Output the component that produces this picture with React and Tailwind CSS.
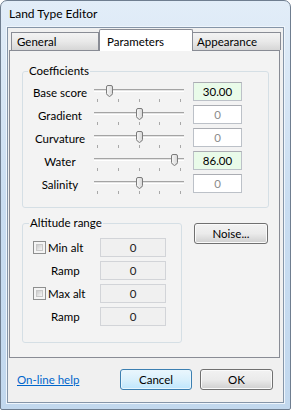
import React from "react";

const font = { fontFamily: "Lato, 'Noto Sans', sans-serif" };

function Thumb() {
  return (
    <svg width="7" height="12" viewBox="0 0 7 12" className="block">
      <defs>
        <linearGradient id="tg" x1="0" y1="0" x2="1" y2="0">
          <stop offset="0" stopColor="#f8f8f8" />
          <stop offset="1" stopColor="#d6d6d6" />
        </linearGradient>
      </defs>
      <path
        d="M0.5 2 Q0.5 0.5 2 0.5 H5 Q6.5 0.5 6.5 2 V8.5 Q6.5 10 3.5 11.5 Q0.5 10 0.5 8.5 Z"
        fill="url(#tg)"
        stroke="#7b7b7b"
        strokeWidth="1"
      />
    </svg>
  );
}

function Slider({ thumb }) {
  return (
    <div className="relative w-[90px] h-[21px] shrink-0">
      <div className="absolute left-0 top-[7px] w-[90px] h-[3px] border-t border-[#a4a4a4] bg-[#e4e4e4] border-b border-b-[#ffffff]" />
      <div className="absolute left-0 top-[17px] w-[90px] px-[3px] flex justify-between">
        {[0, 1, 2, 3, 4].map((i) => (
          <div key={i} className="w-px h-[3px] bg-[#a8a8a8]" />
        ))}
      </div>
      <div className={"absolute top-[3px] " + thumb}>
        <Thumb />
      </div>
    </div>
  );
}

const coeffs = [
  { label: "Base score", thumb: "left-[12px]", value: "30.00", active: true },
  { label: "Gradient", thumb: "left-[42px]", value: "0", active: false },
  { label: "Curvature", thumb: "left-[42px]", value: "0", active: false },
  { label: "Water", thumb: "left-[77px]", value: "86.00", active: true },
  { label: "Salinity", thumb: "left-[42px]", value: "0", active: false },
];

function Checkbox() {
  return (
    <div className="w-[13px] h-[13px] border border-[#8e8f8f] bg-[#f4f4f4] p-[2px] shrink-0">
      <div className="w-full h-full border border-[#c8c8c8] bg-gradient-to-br from-[#cbcbcb] to-[#f6f6f6]" />
    </div>
  );
}

function AltBox() {
  return (
    <div className="w-[66px] h-[19px] border border-[#d2d4d8] bg-[#f0f0f0] flex items-center justify-center text-[#222] leading-none">
      0
    </div>
  );
}

function VistaButton({ children, className, def }) {
  return (
    <div
      className={
        "h-[21px] rounded-[3px] border flex items-center justify-center text-black leading-none shrink-0 " +
        (def
          ? "border-[#3c7fb1] bg-gradient-to-b from-[#eaf6fd] via-[#d9f0fc] to-[#bee6fd] shadow-[inset_0_0_0_1px_#e8f6fd]"
          : "border-[#707070] bg-gradient-to-b from-[#f2f2f2] via-[#ebebeb] to-[#cfcfcf] shadow-[inset_0_0_0_1px_#fafafa]") +
        " " +
        className
      }
    >
      {children}
    </div>
  );
}

export default function App() {
  return (
    <div
      style={font}
      className="w-[291px] h-[410px] border border-[#6f7e90] rounded-t-[7px] rounded-b-[2px] bg-gradient-to-b from-[#e2edf8] via-[#c9ddf1] to-[#c2d8ee] text-[11.5px] text-black overflow-hidden"
    >
      <div className="h-[26px] pl-[8px] flex items-center text-[12px]">Land Type Editor</div>
      <div className="ml-[6px] w-[277px] h-[376px] border border-[#8595a8] bg-[#f0f0f0] shadow-[0_0_0_1px_#eef5fc] flex flex-col">
        <div className="pl-[1px]">
          {/* tab strip */}
          <div className="h-[22px] flex items-end pl-[2px]">
            <div className="w-[88px] h-[18px] border border-b-0 border-[#898c95] bg-gradient-to-b from-[#f3f3f3] via-[#e9e9e9] to-[#d6d6d6] pl-[5px] flex items-center">
              General
            </div>
            <div className="relative z-10 w-[94px] h-[22px] -mb-px border border-b-0 border-[#898c95] rounded-t-[2px] bg-white pl-[7px] pt-[3px]">
              Parameters
            </div>
            <div className="w-[88px] h-[18px] border border-b-0 border-l-0 border-[#898c95] bg-gradient-to-b from-[#f3f3f3] via-[#e9e9e9] to-[#d6d6d6] pl-[4px] flex items-center">
              Appearance
            </div>
          </div>
          {/* panel */}
          <div className="w-[271px] h-[308px] border border-[#898c95] bg-[#f3f3f3] pl-[12px] pt-[13px]">
            <fieldset className="w-[247px] h-[144px] border border-[#d5dfe5] rounded-[3px] px-0">
              <legend className="ml-[5px] px-[1px] leading-[14px]">Coefficients</legend>
              <div className="flex flex-col gap-[4px] mt-[4px]">
                {coeffs.map((c) => (
                  <div key={c.label} className="flex items-start h-[19px] pl-[3px]">
                    <div className="w-[68px] text-center leading-[16px] pt-[3px]">{c.label}</div>
                    <Slider thumb={c.thumb} />
                    <div
                      className={
                        "ml-[9px] w-[49px] h-[19px] border border-[#bcc1c8] border-t-[#abadb3] flex items-center justify-center leading-none " +
                        (c.active ? "bg-[#e9fbe9] text-black" : "bg-white text-[#8c8c8c]")
                      }
                    >
                      {c.value}
                    </div>
                  </div>
                ))}
              </div>
            </fieldset>
            <div className="flex items-start mt-[8px]">
              <fieldset className="w-[160px] h-[127px] border border-[#d5dfe5] rounded-[3px] px-0">
                <legend className="ml-[6px] px-[1px] leading-[14px]">Altitude range</legend>
                <div className="flex flex-col gap-[4px] mt-[8px] pl-[10px]">
                  <div className="flex items-center h-[19px]">
                    <div className="w-[67px] flex items-center">
                      <Checkbox />
                      <span className="ml-[2px]">Min alt</span>
                    </div>
                    <AltBox />
                  </div>
                  <div className="flex items-center h-[19px]">
                    <div className="w-[67px] pl-[18px]">Ramp</div>
                    <AltBox />
                  </div>
                  <div className="flex items-center h-[19px]">
                    <div className="w-[67px] flex items-center">
                      <Checkbox />
                      <span className="ml-[2px]">Max alt</span>
                    </div>
                    <AltBox />
                  </div>
                  <div className="flex items-center h-[19px]">
                    <div className="w-[67px] pl-[18px]">Ramp</div>
                    <AltBox />
                  </div>
                </div>
              </fieldset>
              <VistaButton className="ml-[12px] mt-[7px] w-[74px]">Noise...</VistaButton>
            </div>
          </div>
        </div>
        {/* bottom buttons */}
        <div className="flex items-center mt-[11px] h-[21px]">
          <div className="ml-[9px] w-[103px] shrink-0">
            <span className="text-[#0066cc] underline">On-line help</span>
          </div>
          <VistaButton def className="w-[72px]">Cancel</VistaButton>
          <VistaButton className="ml-[8px] w-[73px]">OK</VistaButton>
        </div>
      </div>
    </div>
  );
}
